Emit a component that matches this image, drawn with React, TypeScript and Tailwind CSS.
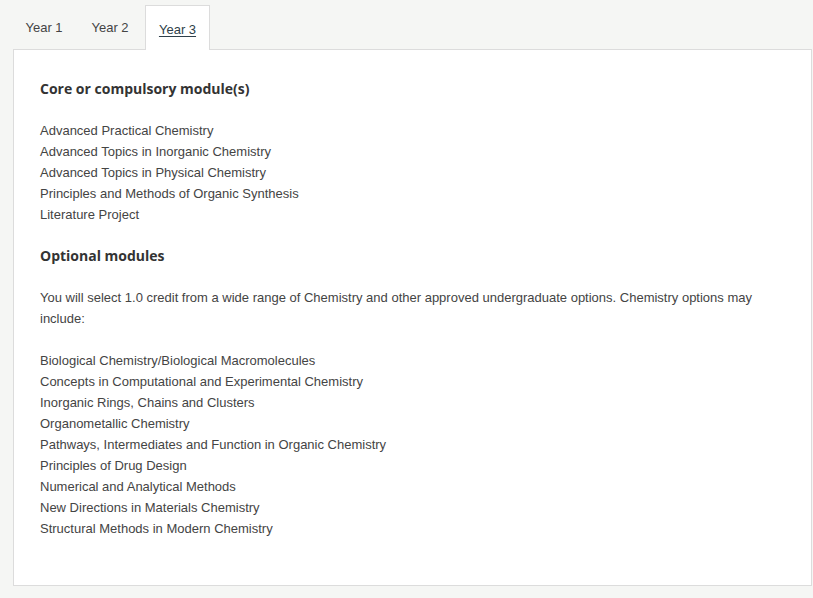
import React from "react";

const core = [
  "Advanced Practical Chemistry",
  "Advanced Topics in Inorganic Chemistry",
  "Advanced Topics in Physical Chemistry",
  "Principles and Methods of Organic Synthesis",
  "Literature Project",
];

const optional = [
  "Biological Chemistry/Biological Macromolecules",
  "Concepts in Computational and Experimental Chemistry",
  "Inorganic Rings, Chains and Clusters",
  "Organometallic Chemistry",
  "Pathways, Intermediates and Function in Organic Chemistry",
  "Principles of Drug Design",
  "Numerical and Analytical Methods",
  "New Directions in Materials Chemistry",
  "Structural Methods in Modern Chemistry",
];

export default function App() {
  return (
    <div className="w-[813px] h-[598px] bg-[#f5f6f4] overflow-hidden" style={{ fontFamily: '"Liberation Sans", Arial, sans-serif' }}>
      <div className="flex pl-[12px] pt-[5px] relative z-10">
        <div className="w-[64px] h-[44px] flex items-center justify-center text-[13px] text-[#444] pt-[2px]">Year 1</div>
        <div className="w-[64px] h-[44px] ml-[2px] flex items-center justify-center text-[13px] text-[#444] pt-[2px]">Year 2</div>
        <div className="w-[65px] h-[45px] ml-[3px] -mb-[1px] flex items-center justify-center text-[13px] text-[#2e3f4a] underline underline-offset-2 bg-white border border-b-0 border-[#dcdcdc] pt-[3px]">Year 3</div>
      </div>
      <div className="ml-[13px] w-[799px] h-[537px] bg-white border border-[#dcdcdc] pl-[26px] pt-[29px] text-[13px] leading-[21px] text-[#444]">
        <h2 className="text-[14px] leading-[20px] font-bold text-[#333]" style={{ fontFamily: '"Open Sans", sans-serif' }}>Core or compulsory module(s)</h2>
        <ul className="mt-[21px]">
          {core.map((c) => (
            <li key={c}>{c}</li>
          ))}
        </ul>
        <h2 className="mt-[21px] text-[14px] leading-[20px] font-bold text-[#333]" style={{ fontFamily: '"Open Sans", sans-serif' }}>Optional modules</h2>
        <p className="mt-[21px] pr-[30px]">
          You will select 1.0 credit from a wide range of Chemistry and other approved undergraduate options. Chemistry options may include:
        </p>
        <ul className="mt-[21px]">
          {optional.map((c) => (
            <li key={c}>{c}</li>
          ))}
        </ul>
      </div>
    </div>
  );
}
